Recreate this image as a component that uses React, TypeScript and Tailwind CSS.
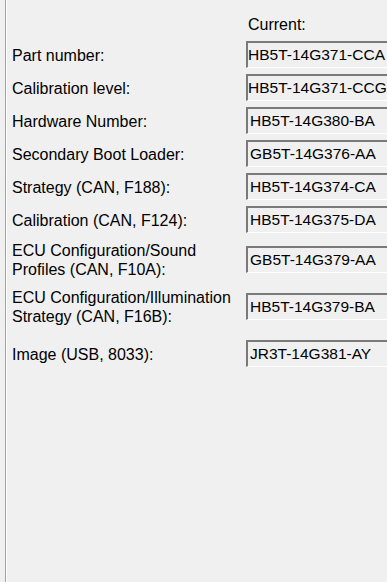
import React from "react";

const rows: { label: string[]; value: string; h: string; shift?: boolean }[] = [
  { label: ["Part number:"], value: "HB5T-14G371-CCA", h: "h-[33px]", shift: true },
  { label: ["Calibration level:"], value: "HB5T-14G371-CCG", h: "h-[33px]", shift: true },
  { label: ["Hardware Number:"], value: "HB5T-14G380-BA", h: "h-[33px]" },
  { label: ["Secondary Boot Loader:"], value: "GB5T-14G376-AA", h: "h-[33px]" },
  { label: ["Strategy (CAN, F188):"], value: "HB5T-14G374-CA", h: "h-[33px]" },
  { label: ["Calibration (CAN, F124):"], value: "HB5T-14G375-DA", h: "h-[33px]" },
  { label: ["ECU Configuration/Sound", "Profiles (CAN, F10A):"], value: "GB5T-14G379-AA", h: "h-[47px]" },
  { label: ["ECU Configuration/Illumination", "Strategy (CAN, F16B):"], value: "HB5T-14G379-BA", h: "h-[47px]" },
  { label: ["Image (USB, 8033):"], value: "JR3T-14G381-AY", h: "h-[47px]" },
];

export default function App() {
  return (
    <div
      className="w-[387px] h-[582px] bg-[#f0f0f0] overflow-hidden flex text-black text-[16px]"
      style={{ fontFamily: '"Liberation Sans", Arial, sans-serif' }}
    >
      <div className="w-[5px] shrink-0" />
      <div className="w-px shrink-0 bg-[#a0a0a0]" />
      <div className="w-px shrink-0 bg-white" />
      <div className="flex-1 flex flex-col pl-[5px] min-w-0">
        <div className="h-[38px] flex items-center pl-[236px] pt-[12px]">Current:</div>
        {rows.map((r) => (
          <div key={r.value} className={`${r.h} flex items-center`}>
            <div className="w-[234px] shrink-0 leading-[19px] whitespace-nowrap pt-px">
              {r.label.map((l) => (
                <div key={l}>{l}</div>
              ))}
            </div>
            <div className="h-[27px] w-[160px] shrink-0 border-t-2 border-l-2 border-t-[#7a7a7a] border-l-[#7a7a7a] border-b border-b-white bg-[#f0f0f0] flex items-center overflow-hidden whitespace-nowrap text-[15.5px]">
              <span className={r.shift ? "pl-0" : "pl-[2px]"}>{r.value}</span>
            </div>
          </div>
        ))}
      </div>
    </div>
  );
}
